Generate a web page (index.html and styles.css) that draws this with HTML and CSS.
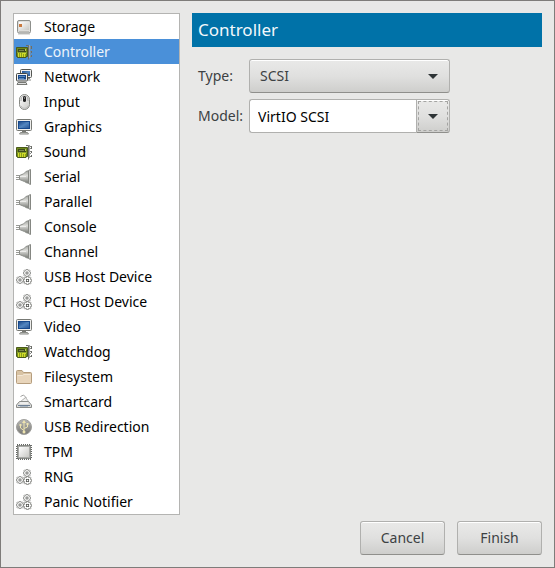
FILE: index.html
```html
<!DOCTYPE html>
<html lang="en">
<head>
<meta charset="utf-8">
<meta name="viewport" content="width=device-width, initial-scale=1">
<title>Add New Virtual Hardware</title>
<link rel="stylesheet" href="styles.css">
</head>
<body>
<svg class="sprites" aria-hidden="true">
  <defs>
    <linearGradient id="metal" x1="0" y1="0" x2="1" y2="1"><stop offset="0" stop-color="#fff"/><stop offset="1" stop-color="#c8c8c4"/></linearGradient>
    <linearGradient id="plug" x1="0" y1="0" x2="0" y2="1"><stop offset="0" stop-color="#a5a7a2"/><stop offset=".4" stop-color="#dededb"/><stop offset="1" stop-color="#777974"/></linearGradient>
    <linearGradient id="screen" x1="0" y1="0" x2="1" y2="1"><stop offset="0" stop-color="#204c8c"/><stop offset=".5" stop-color="#5286c0"/><stop offset="1" stop-color="#2a5796"/></linearGradient>
    <linearGradient id="ball" x1="0" y1="0" x2="0" y2="1"><stop offset="0" stop-color="#b8b8b5"/><stop offset="1" stop-color="#777773"/></linearGradient>
  </defs>
  <symbol id="storage" viewBox="0 0 16 16">
    <path d="M2 15h12" stroke="#c4c4c2"/>
    <rect x="1.500" y="1.500" width="13" height="12.500" rx="1.500" fill="#dededb" stroke="#8d8f8b"/>
    <path d="M3 3h10v8H3z" fill="url(#metal)"/>
    <path d="M3 5h3v3H3z" fill="#c9793e"/>
    <path d="M3 12.500h10" stroke="#bdbdb9"/>
  </symbol>
  <symbol id="card" viewBox="0 0 16 16">
    <path d="M.5 3.500h11v9H10v1H1.500v-1h-1z" fill="#6f8a1c" stroke="#4a5a1a"/>
    <path d="M2 5h8v3H2z" fill="#3e4b1b"/>
    <path d="M3 6h5v1H3z" fill="#7c8a4c"/><path d="M9 5h1v2H9z" fill="#b5c45a"/>
    <path d="M1 8h10v1H1z" fill="#8ba32d"/>
    <path d="M2 9h8v4H2z" fill="#d2de28"/>
    <path d="M3.500 9v4M5.500 9v4M7.500 10v3M9.500 10v3" stroke="#8c9e1c"/>
    <path d="M10 1.500h2.500v14" fill="none" stroke="#6b6d68"/>
    <path d="M13.500 1v13" stroke="#a4a6a1"/>
    <path d="M15.500 2v3M15.500 7v2M15.500 11v2" stroke="#6b6d68"/>
    <path d="M14 2.500h1M14 4.500h1M14 7.500h1M14 9.500h1M14 12.500h1" stroke="#888a85"/>
  </symbol>
  <symbol id="network" viewBox="0 0 16 16">
    <rect x="4.500" y=".5" width="11" height="8" rx="1" fill="#eee" stroke="#555753"/>
    <path d="M6 2h8v5H6z" fill="url(#screen)"/>
    <path d="M12 9.500h2M12 11h3" stroke="#888a85"/>
    <rect x=".5" y="4.500" width="11" height="7.500" rx="1" fill="#eee" stroke="#454743"/>
    <path d="M2 6h8v4.500H2z" fill="#16498d"/><path d="M3 7.500h6M3 9.500h5" stroke="#5585bc"/>
    <path d="M2 13.500h8l1 2H1z" fill="#ddd" stroke="#777974"/>
  </symbol>
  <symbol id="mouse" viewBox="0 0 16 16">
    <rect x="3.500" y=".5" width="10" height="15" rx="5" fill="url(#metal)" stroke="#888a85"/>
    <path d="M5 7c0-3 .5-5 3.500-5S12 4 12 7" fill="none" stroke="#aaa"/>
    <rect x="7" y="2" width="3" height="6" rx="1.500" fill="#202020"/><path d="M8.500 3v2" stroke="#777"/>
    <path d="M5 12c2 3 5 3 7 0" stroke="#bbb" fill="none"/>
  </symbol>
  <symbol id="monitor" viewBox="0 0 16 16">
    <rect x=".5" y=".5" width="15" height="11" rx="1" fill="#eeeeec" stroke="#777974"/>
    <path d="M2 2h12v8H2z" fill="#16498d"/>
    <path d="M3 3h10v6H3z" fill="url(#screen)"/>
    <path d="M6 12h4v1.500H6z" fill="#777974"/>
    <path d="M4.500 13.500h7l1 1.500h-9z" fill="#ddd" stroke="#888a85"/>
  </symbol>
  <symbol id="serial" viewBox="0 0 16 16">
    <path d="M0 6.500h4M0 8.500h4M0 10.500h4" stroke="#999b96"/>
    <path d="M3.500 6.500 6 5.500C8 5 9 3 11 2h1.500v12H11C9 13 8 12 6 11.500l-2.500-1z" fill="url(#plug)" stroke="#8c8e89"/>
    <path d="M4 7.500h6" stroke="#ededeb"/>
    <path d="M12.500 1.500l2-1v15l-2-1z" fill="#d0d1ce" stroke="#858782"/>
  </symbol>
  <symbol id="gear" viewBox="0 0 8 8">
    <path d="M3 .5h2v1l1.500-.5.500.5-.5 1.500h1v2h-1l.5 1.500-.5.500L5 6.500v1H3v-1L1.500 7 1 6.500 1.500 5h-1V3h1L1 1.500 1.500 1 3 1.500z" fill="#fff" stroke="#70726e" stroke-width=".65"/>
    <rect x="3" y="3" width="2" height="2" fill="#fff" stroke="#50524e" stroke-width=".7"/>
  </symbol>
  <symbol id="gears" viewBox="0 0 16 16">
    <use href="#gear" x="7" y="0" width="8" height="8"/>
    <use href="#gear" x="0" y="7" width="8" height="8"/>
    <use href="#gear" x="7" y="7" width="9" height="9"/>
  </symbol>
  <symbol id="folder" viewBox="0 0 16 16">
    <path d="M.5 2.500q0-1 1-1H6l1.500 2h7q1 0 1 1v9q0 1-1 1h-13q-1 0-1-1z" fill="#d8c3a4" stroke="#b59d7d"/>
    <path d="M1 6h5.500L8 5h7v9H1z" fill="#e8d5bb"/>
    <path d="M1.500 6.500h5l1.500-1h6.500" fill="none" stroke="#f3e7d6"/>
  </symbol>
  <symbol id="reader" viewBox="0 0 16 16">
    <path d="m4 8 5.500-4.500 3.500 4.500" fill="#f0f0f0" stroke="#b0b0ae"/>
    <path d="m4.500 2.500 3-1.500 3 3" fill="none" stroke="#a0a09e"/>
    <path d="M.5 11 3.500 7.500h9l3 3.500v2.500h-15z" fill="#dcdcdb" stroke="#8b8d8a"/>
    <path d="M4 9h8" stroke="#fff"/>
    <path d="M2 11.500h12" stroke="#6c7f94"/><path d="M4 12.500h8" stroke="#aab6c2"/>
  </symbol>
  <symbol id="usb" viewBox="0 0 16 16">
    <circle cx="8" cy="8" r="7.500" fill="url(#ball)" stroke="#a0a09d"/>
    <path d="M8 13V3M8 11.500 4.500 9V6M8 9.500 11.500 8V5" fill="none" stroke="#eee4b0"/>
    <path d="m6 4 2-3 2 3z" fill="#eee4b0"/><path d="M3.500 5h2v2h-2zM10.500 4h2v2h-2z" fill="#eee4b0"/>
    <circle cx="8" cy="13" r="1.500" fill="#eee4b0"/>
  </symbol>
  <symbol id="chip" viewBox="0 0 16 16">
    <rect x="1" y="1" width="14" height="14" fill="#bbb" stroke="#666865" stroke-width="2" stroke-dasharray="1 1"/>
    <rect x="1.500" y="1.500" width="13" height="13" rx="1" fill="#a9aaa7" stroke="#777974" stroke-opacity=".6"/>
    <rect x="3" y="3" width="10" height="10" fill="url(#metal)"/>
  </symbol>
</svg>
<main class="dialog">
  <ul class="hardware" aria-label="Hardware type">
    <li><button class="item" type="button"><svg class="icon"><use href="#storage"/></svg>Storage</button></li>
    <li><button class="item selected" type="button" aria-current="true"><svg class="icon"><use href="#card"/></svg>Controller</button></li>
    <li><button class="item" type="button"><svg class="icon"><use href="#network"/></svg>Network</button></li>
    <li><button class="item" type="button"><svg class="icon"><use href="#mouse"/></svg>Input</button></li>
    <li><button class="item" type="button"><svg class="icon"><use href="#monitor"/></svg>Graphics</button></li>
    <li><button class="item" type="button"><svg class="icon"><use href="#card"/></svg>Sound</button></li>
    <li><button class="item" type="button"><svg class="icon"><use href="#serial"/></svg>Serial</button></li>
    <li><button class="item" type="button"><svg class="icon"><use href="#serial"/></svg>Parallel</button></li>
    <li><button class="item" type="button"><svg class="icon"><use href="#serial"/></svg>Console</button></li>
    <li><button class="item" type="button"><svg class="icon"><use href="#serial"/></svg>Channel</button></li>
    <li><button class="item" type="button"><svg class="icon"><use href="#gears"/></svg>USB Host Device</button></li>
    <li><button class="item" type="button"><svg class="icon"><use href="#gears"/></svg>PCI Host Device</button></li>
    <li><button class="item" type="button"><svg class="icon"><use href="#monitor"/></svg>Video</button></li>
    <li><button class="item" type="button"><svg class="icon"><use href="#card"/></svg>Watchdog</button></li>
    <li><button class="item" type="button"><svg class="icon"><use href="#folder"/></svg>Filesystem</button></li>
    <li><button class="item" type="button"><svg class="icon"><use href="#reader"/></svg>Smartcard</button></li>
    <li><button class="item" type="button"><svg class="icon"><use href="#usb"/></svg>USB Redirection</button></li>
    <li><button class="item" type="button"><svg class="icon"><use href="#chip"/></svg>TPM</button></li>
    <li><button class="item" type="button"><svg class="icon"><use href="#gears"/></svg>RNG</button></li>
    <li><button class="item" type="button"><svg class="icon"><use href="#gears"/></svg>Panic Notifier</button></li>
  </ul>
  <section class="details">
    <h1 class="title">Controller</h1>
    <form class="fields">
      <label for="type">Type:</label>
      <div class="combo">
        <select id="type" class="raised"><option>SCSI</option></select>
        <svg class="arrow over" viewBox="0 0 10 5" aria-hidden="true"><path d="M0 0h10L5 5z"/></svg>
      </div>
      <label for="model">Model:</label>
      <div class="combo">
        <input id="model" type="text" value="VirtIO SCSI">
        <button class="raised drop" type="button" aria-label="Show models"><svg class="arrow" viewBox="0 0 10 5"><path d="M0 0h10L5 5z"/></svg></button>
      </div>
    </form>
  </section>
  <footer class="actions">
    <button class="raised" type="button">Cancel</button>
    <button class="raised" type="button">Finish</button>
  </footer>
</main>
</body>
</html>
```
FILE: styles.css
```css
* {
  box-sizing: border-box;
}

body {
  margin: 0;
  color: #3c4143;
  background: #e8e8e7;
  font: 14px/20px "Noto Sans", sans-serif;
}

button,
input,
select {
  margin: 0;
  font: inherit;
  color: inherit;
}

.sprites {
  position: absolute;
  width: 0;
  height: 0;
}

.dialog {
  display: grid;
  grid-template-columns: 167px 1fr;
  grid-template-rows: 1fr auto;
  gap: 6px 12px;
  min-height: 100vh;
  padding: 12px;
  border: 1px solid #7e7c7a;
}

.hardware {
  margin: 0;
  padding: 0;
  list-style: none;
  color: #000;
  background: #fff;
  border: 1px solid #b4b4b2;
}

.item {
  display: flex;
  align-items: center;
  gap: 12px;
  width: 100%;
  height: 25px;
  padding: 0 2px;
  border: 0;
  background: none;
  text-align: left;
}

.selected {
  color: #edf4fb;
  background: #4a90d9;
}

.icon {
  flex: none;
  width: 16px;
  height: 16px;
}

.title {
  margin: 0 0 12px;
  padding: 6px;
  color: #f2f8fb;
  background: #0072a8;
  font-size: 17px;
  font-weight: 400;
  line-height: 22px;
}

.fields {
  display: grid;
  grid-template-columns: auto minmax(0, 201px);
  justify-content: start;
  align-items: center;
  gap: 6px;
  padding-left: 6px;
}

.combo {
  position: relative;
  display: flex;
}

.raised {
  height: 34px;
  border: 1px solid #b0b0ae;
  border-bottom-color: #8f8f8c;
  border-radius: 3px;
  background: linear-gradient(#e9e9e8, #e0e0df 50%, #cececc);
  box-shadow: inset 0 1px #fff;
}

select.raised {
  flex: 1;
  width: 201px;
  min-width: 0;
  padding: 0 30px 0 10px;
  appearance: none;
}

#model {
  flex: 1;
  width: 167px;
  min-width: 0;
  height: 34px;
  padding: 0 8px;
  color: #000;
  background: #fff;
  border: 1px solid #b0b0ae;
  border-right: 0;
  border-radius: 3px 0 0 3px;
}

.drop {
  display: flex;
  align-items: center;
  justify-content: center;
  width: 34px;
  padding: 0;
  border-radius: 0 3px 3px 0;
  outline: 1px dashed #a4a4a2;
  outline-offset: -3px;
}

.arrow {
  width: 10px;
  height: 5px;
  fill: #2e3436;
}

.over {
  position: absolute;
  top: 15px;
  right: 12px;
  pointer-events: none;
}

.actions {
  grid-column: 2;
  display: flex;
  justify-content: flex-end;
  gap: 12px;
}

.actions .raised {
  width: 85px;
}
```
